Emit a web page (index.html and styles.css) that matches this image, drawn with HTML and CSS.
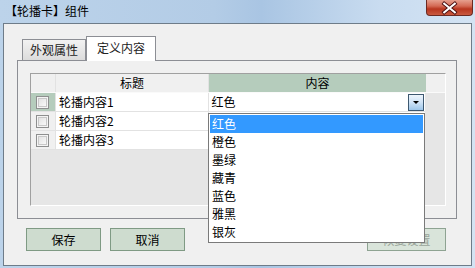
FILE: index.html
```html
<!DOCTYPE html>
<html lang="zh-CN">

<head>
  <meta charset="UTF-8">
  <title>【轮播卡】组件</title>
  <link rel="stylesheet" href="styles.css">
</head>

<body>
  <div class="window">
    <div class="titlebar">
      <span class="caption">【轮播卡】组件</span>
      <div class="close" aria-label="关闭">
        <svg width="47" height="16" viewBox="0 0 47 16">
          <path d="M18 3.5 L29 12.5 M29 3.5 L18 12.5" stroke="#4a1010" stroke-width="4" stroke-linecap="square" />
          <path d="M18 3.5 L29 12.5 M29 3.5 L18 12.5" stroke="#fff" stroke-width="2.2" stroke-linecap="square" />
        </svg>
      </div>
    </div>

    <div class="client">
      <div class="tabs">
        <div class="tab">外观属性</div>
        <div class="tab active">定义内容</div>
      </div>

      <div class="panel">
        <div class="grid">
          <div class="row head">
            <div class="cell chk"></div>
            <div class="cell title center">标题</div>
            <div class="cell content center current">内容</div>
          </div>
          <div class="row">
            <div class="cell chk current"><span class="box"></span></div>
            <div class="cell title">轮播内容1</div>
            <div class="cell content combo">
              <span>红色</span>
              <span class="arrow"></span>
            </div>
          </div>
          <div class="row">
            <div class="cell chk"><span class="box"></span></div>
            <div class="cell title">轮播内容2</div>
            <div class="cell content"></div>
          </div>
          <div class="row">
            <div class="cell chk"><span class="box"></span></div>
            <div class="cell title">轮播内容3</div>
            <div class="cell content"></div>
          </div>
        </div>
      </div>

      <div class="actions">
        <button class="btn">保存</button>
        <button class="btn">取消</button>
        <button class="btn wide" disabled>恢复设置</button>
      </div>

      <!-- open combo list lies over the grid and the buttons -->
      <ul class="droplist">
        <li class="hover">红色</li>
        <li>橙色</li>
        <li>墨绿</li>
        <li>藏青</li>
        <li>蓝色</li>
        <li>雅黑</li>
        <li>银灰</li>
      </ul>
    </div>
  </div>
</body>

</html>
```

FILE: styles.css
```css
/* Reset */

*,
*::before,
*::after {
  box-sizing: border-box;
  margin: 0;
  padding: 0;
}

:root {
  --face: #f0f0f0;
  --grid-green: #b5ccbc;
  --font: "Noto Sans CJK SC", "Liberation Sans", sans-serif;
}

body {
  font-family: var(--font);
  font-size: 12px;
  color: #000;
  background: #c4d8ec;
}

/* Window frame */

.window {
  width: 475px;
  height: 268px;
  background: linear-gradient(90deg, #bcd3ea 0%, #b3cce6 45%, #a9c5e3 55%, #c9dcf0 80%, #d3e3f3 100%);
  display: flex;
  flex-direction: column;
}

.titlebar {
  height: 23px;
  display: flex;
  justify-content: space-between;
  align-items: flex-start;
}

.caption {
  padding: 3px 0 0 5px;
  line-height: 16px;
  font-size: 12px;
}

.close {
  width: 47px;
  height: 16px;
  margin-right: 2px;
  border: 1px solid #6b2a22;
  border-top: none;
  border-radius: 0 0 4px 4px;
  background: linear-gradient(#e6a08f 0%, #d46a55 40%, #b8361f 60%, #c95a40 100%);
  display: flex;
}

/* Client area */

.client {
  position: relative;
  margin: 0 3px;
  height: 243px;
  background: var(--face);
  border: 1px solid #6e7c89;
}

/* Tabs */

.tabs {
  display: flex;
  align-items: flex-end;
  height: 36px;
  padding-left: 18px;
}

.tab {
  height: 21px;
  width: 64px;
  border: 1px solid #8c8e94;
  border-bottom: none;
  background: linear-gradient(#f2f2f2, #dcdcdc);
  color: #222;
  text-align: center;
  line-height: 19px;
}

.tab.active {
  position: relative;
  z-index: 1;
  height: 25px;
  width: 70px;
  margin-bottom: -1px;
  background: #fff;
  line-height: 22px;
}

/* Panel + grid */

.panel {
  margin-left: 13px;
  width: 440px;
  height: 159px;
  border: 1px solid #8c8e94;
  padding: 12px 0 0 12px;
}

.grid {
  width: 416px;
  height: 133px;
  background: #e6e6e6;
  border: 1px solid #a0a0a0;
  border-right-color: #fff;
  border-bottom-color: #fff;
}

.row {
  display: flex;
  height: 19px;
  border-bottom: 1px solid #e2e2e2;
  width: 394px;
}

.row.head {
  border-bottom-color: #fafafa;
  width: 414px;
  background: var(--face);
}

.cell {
  height: 18px;
  line-height: 18px;
  background: #fff;
  border-right: 1px solid #e2e2e2;
  white-space: nowrap;
}

.head .cell {
  background: var(--face);
}

.cell.chk {
  width: 25px;
  background: var(--face);
  display: flex;
  align-items: center;
  justify-content: center;
}

.cell.title {
  width: 153px;
  padding-left: 3px;
}

.cell.content {
  width: 217px;
  padding-left: 3px;
  border-right: none;
}

.cell.center {
  text-align: center;
  padding-left: 0;
}

.head .cell.current,
.cell.current {
  background: var(--grid-green);
}

.box {
  width: 13px;
  height: 13px;
  border: 1px solid #8e8f8f;
  background: linear-gradient(135deg, #dcdcdc, #fff);
  box-shadow: inset 0 0 0 1px #f4f4f4, inset 0 0 0 2px #c8c8c8;
}

.combo {
  display: flex;
  justify-content: space-between;
  align-items: center;
  padding-right: 1px;
}

.arrow {
  width: 16px;
  height: 17px;
  border: 1px solid #3d5870;
  background: linear-gradient(#eef5fc, #cfe3f6 50%, #9dc6ea);
  display: flex;
  align-items: center;
  justify-content: center;
}

.arrow::after {
  content: "";
  border-left: 3px solid transparent;
  border-right: 3px solid transparent;
  border-top: 3px solid #000;
}

/* Buttons */

.actions {
  display: flex;
  gap: 9px;
  padding: 9px 25px 0 22px;
}

.btn {
  font-family: var(--font);
  font-size: 12px;
  width: 75px;
  height: 23px;
  background: #cedccf;
  border: 1px solid #7f9a84;
  color: #000;
}

.btn.wide {
  width: 79px;
  margin-left: auto;
  background: #d9e4da;
  border-color: #8ea392;
  color: #9aa59b;
}

/* Dropdown list */

.droplist {
  position: absolute;
  left: 204px;
  top: 89px;
  width: 217px;
  height: 130px;
  list-style: none;
  background: #fff;
  border: 1px solid #7a7a7a;
  padding: 1px;
}

.droplist li {
  height: 18px;
  line-height: 18px;
  padding-left: 2px;
}

.droplist li.hover {
  background: #3399ff;
  color: #fff;
}
```
